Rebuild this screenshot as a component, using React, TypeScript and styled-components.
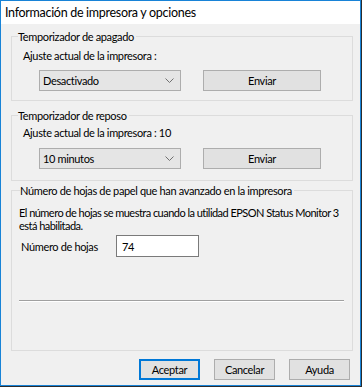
import React from 'react'
import styled, { createGlobalStyle } from 'styled-components'

const GlobalStyle = createGlobalStyle`
  html, body {
    margin: 0;
    padding: 0;
    background: #2b2b2b;
  }
  body {
    font-family: Lato, "Noto Sans", sans-serif;
    font-size: 11px;
    letter-spacing: -0.35px;
    color: #000;
    white-space: nowrap;
  }
`

const Window = styled.div`
  box-sizing: border-box;
  width: 361px;
  height: 386px;
  border: 1px solid #1883d7;
  background: #f0f0f0;
  display: flex;
  flex-direction: column;
`

const TitleBar = styled.div`
  height: 23px;
  background: #fff;
  display: flex;
  align-items: center;
  padding-left: 4px;
  font-size: 12.5px;
  letter-spacing: -0.3px;
`

const Body = styled.div`
  flex: 1;
  display: flex;
  flex-direction: column;
  padding: 5px 7px 0 10px;
`

const Group = styled.fieldset<{ $h: number; $mt?: number }>`
  box-sizing: border-box;
  margin: ${p => p.$mt ?? 0}px 0 0 0;
  padding: 0;
  min-width: 0;
  height: ${p => p.$h}px;
  border: 1px solid #dcdcdc;
  display: flex;
  flex-direction: column;
`

const Legend = styled.legend<{ $pl: number }>`
  margin-left: ${p => p.$pl}px;
  padding: 0 2px 0 0;
  line-height: 15px;
`

const Caption = styled.div<{ $mt: number; $pl: number }>`
  margin-top: ${p => p.$mt}px;
  padding-left: ${p => p.$pl}px;
  line-height: 15px;
`

const ControlRow = styled.div<{ $mt: number }>`
  margin-top: ${p => p.$mt}px;
  padding-left: 27px;
  display: flex;
  gap: 22px;
`

const Select = styled.div`
  box-sizing: border-box;
  width: 142px;
  height: 21px;
  border: 1px solid #adadad;
  background: #e5e5e5;
  display: flex;
  align-items: center;
  justify-content: space-between;
  padding: 0 6px 0 3px;
`

const Button = styled.div<{ $w: number; $default?: boolean }>`
  box-sizing: border-box;
  width: ${p => p.$w}px;
  height: 21px;
  border: 1px solid ${p => (p.$default ? '#0078d7' : '#adadad')};
  box-shadow: ${p => (p.$default ? 'inset 0 0 0 1px #0078d7' : 'none')};
  background: #e1e1e1;
  display: flex;
  align-items: center;
  justify-content: center;
`

const Description = styled.div`
  margin-top: 8px;
  padding-left: 7px;
  line-height: 13px;
  letter-spacing: -0.53px;
`

const CountRow = styled.div`
  margin-top: 3px;
  padding-left: 9px;
  display: flex;
  align-items: center;
`

const CountLabel = styled.span`
  width: 95px;
`

const CountBox = styled.div`
  box-sizing: border-box;
  width: 83px;
  height: 22px;
  border: 1px solid #7a7a7a;
  background: #fff;
  display: flex;
  align-items: center;
  padding-left: 5px;
`

const Separator = styled.div`
  margin: 43px 8px 0 7px;
  height: 0;
  border-top: 1px solid #a0a0a0;
  border-bottom: 1px solid #fff;
`

const Footer = styled.div`
  display: flex;
  justify-content: flex-end;
  gap: 14px;
  padding: 8px 3px 0 0;
`

const Chevron = () => (
  <svg width="9" height="5" viewBox="0 0 9 5">
    <polyline points="0.5,0.5 4.5,4.5 8.5,0.5" fill="none" stroke="#707070" strokeWidth="1" />
  </svg>
)

const App = () => {
  return (
    <>
      <GlobalStyle />
      <Window>
        <TitleBar>Información de impresora y opciones</TitleBar>
        <Body>
          <Group $h={72}>
            <Legend $pl={6}>Temporizador de apagado</Legend>
            <Caption $mt={4} $pl={11}>Ajuste actual de la impresora :</Caption>
            <ControlRow $mt={7}>
              <Select>
                <span>Desactivado</span>
                <Chevron />
              </Select>
              <Button $w={118}>Enviar</Button>
            </ControlRow>
          </Group>

          <Group $h={73} $mt={7}>
            <Legend $pl={6}>Temporizador de reposo</Legend>
            <Caption $mt={2} $pl={11}>Ajuste actual de la impresora : 10</Caption>
            <ControlRow $mt={8}>
              <Select>
                <span>10 minutos</span>
                <Chevron />
              </Select>
              <Button $w={118}>Enviar</Button>
            </ControlRow>
          </Group>

          <Group $h={168} $mt={2}>
            <Legend $pl={8}>Número de hojas de papel que han avanzado en la impresora</Legend>
            <Description>
              El número de hojas se muestra cuando la utilidad EPSON Status Monitor 3
              <br />
              está habilitada.
            </Description>
            <CountRow>
              <CountLabel>Número de hojas</CountLabel>
              <CountBox>74</CountBox>
            </CountRow>
            <Separator />
          </Group>

          <Footer>
            <Button $w={61} $default>Aceptar</Button>
            <Button $w={61}>Cancelar</Button>
            <Button $w={61}>Ayuda</Button>
          </Footer>
        </Body>
      </Window>
    </>
  )
}

export default App
